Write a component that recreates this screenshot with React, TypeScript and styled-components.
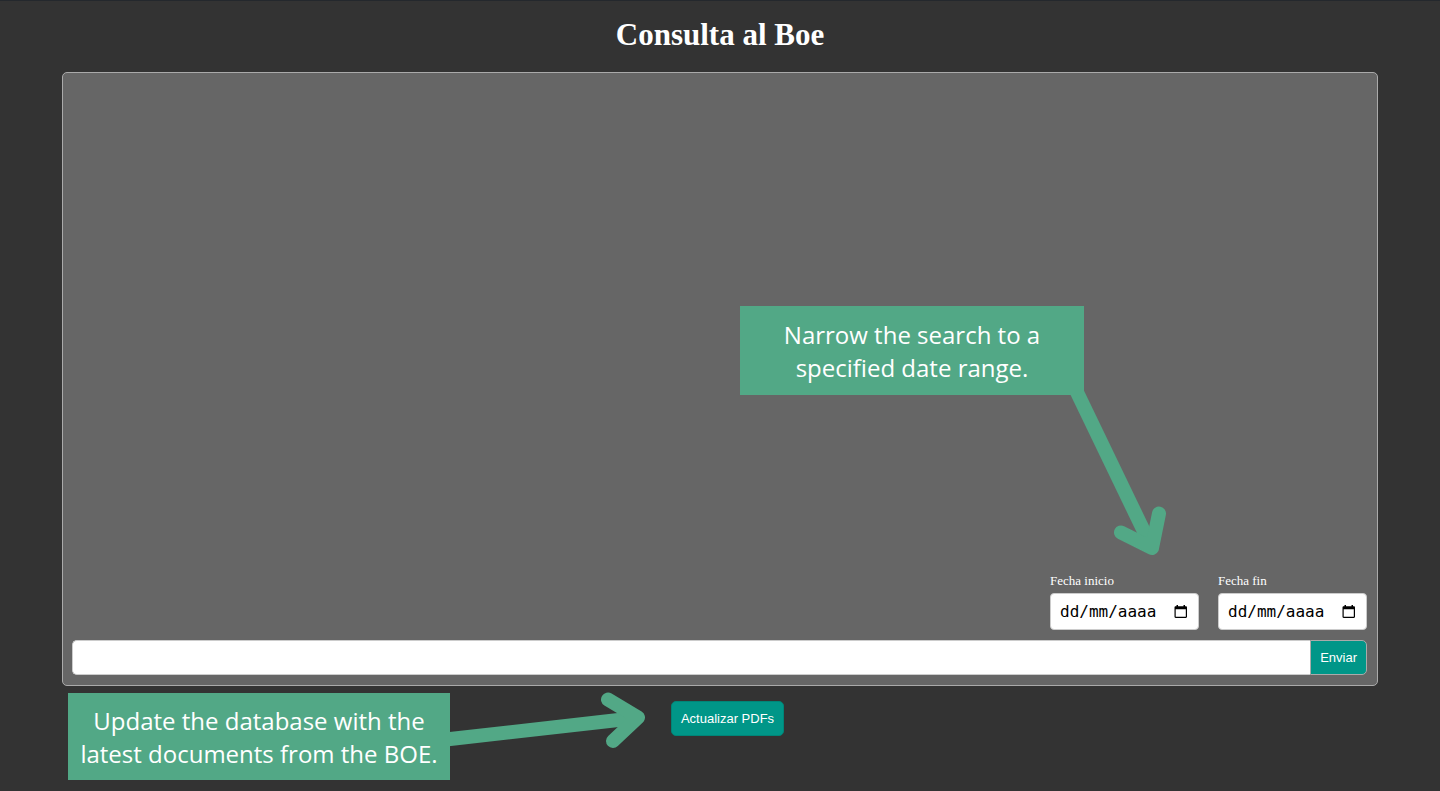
import React from "react";
import styled, { createGlobalStyle } from "styled-components";

const GlobalStyle = createGlobalStyle`
  *, *::before, *::after { box-sizing: border-box; }
  body {
    margin: 0;
    background: #333;
    color: #fff;
    font-family: "Liberation Serif", "Times New Roman", serif;
  }
`;

const Page = styled.div`
  display: flex;
  flex-direction: column;
  min-height: 100vh;
  padding: 0 62px;
  border-top: 1px solid #24282d;
`;

const Title = styled.h1`
  margin: 0;
  padding: 15px 0 19px;
  font-size: 31px;
  line-height: 37px;
  text-align: center;
`;

const Panel = styled.main`
  position: relative;
  flex: 1;
  display: flex;
  flex-direction: column;
  padding: 9px 10px 10px 9px;
  border: 1px solid #aaa;
  border-radius: 5px;
  background: #666;
`;

const Messages = styled.section`
  flex: 1;
`;

const Form = styled.form`
  display: flex;
  flex-direction: column;
  gap: 10px;
`;

const DateRange = styled.div`
  display: flex;
  justify-content: flex-end;
  gap: 19px;
`;

const Field = styled.div`
  display: flex;
  flex-direction: column;
  gap: 5px;
  width: 149px;
`;

const FieldLabel = styled.label`
  font-size: 13px;
  line-height: 15px;
`;

const DateBox = styled.div`
  display: flex;
  align-items: center;
  height: 37px;
  padding: 0 10px 0 9px;
  border: 1px solid #ccc;
  border-radius: 4px;
  background: #fff;
`;

const DateInput = styled.input`
  flex: 1;
  min-width: 0;
  padding: 0;
  border: 0;
  outline: 0;
  background: transparent;
  color: #000;
  font-family: "DejaVu Sans Mono", monospace;
  font-size: 16px;
  line-height: 19px;

  &::placeholder {
    color: #000;
    opacity: 1;
  }
`;

const PickerButton = styled.button`
  display: flex;
  padding: 0;
  border: 0;
  background: transparent;
  color: #000;
`;

const QueryRow = styled.div`
  display: flex;
  height: 35px;
`;

const QueryInput = styled.input`
  flex: 1;
  min-width: 0;
  padding: 0 10px;
  border: 1px solid #ccc;
  border-right: 0;
  border-radius: 5px 0 0 5px;
  outline: 0;
  background: #fff;
  font-size: 16px;
`;

const Button = styled.button<{ $joined?: boolean }>`
  padding: 0 9px;
  border: ${(p) => (p.$joined ? "1px solid #aaa" : "1px solid #008578")};
  border-radius: ${(p) => (p.$joined ? "0 5px 5px 0" : "5px")};
  background: #009688;
  color: #fff;
  font-family: "Liberation Sans", Arial, sans-serif;
  font-size: 13px;
  line-height: 15px;
`;

const Footer = styled.footer`
  position: relative;
  display: flex;
  justify-content: center;
  align-items: flex-start;
  height: 105px;
  padding: 15px 0 0 15px;

  ${Button} {
    height: 35px;
  }
`;

const Callout = styled.p`
  position: absolute;
  display: flex;
  align-items: center;
  justify-content: center;
  margin: 0;
  background: #52a886;
  color: #fff;
  font-family: "Open Sans", sans-serif;
  font-size: 24px;
  line-height: 33px;
  text-align: center;
`;

const DateCallout = styled(Callout)`
  right: 293px;
  bottom: 290px;
  width: 344px;
  height: 89px;
`;

const UpdateCallout = styled(Callout)`
  left: 6px;
  top: 7px;
  width: 382px;
  height: 87px;
`;

const Arrow = styled.svg`
  position: absolute;
  fill: none;
  stroke: #52a886;
  stroke-width: 14;
  stroke-linejoin: round;
  pointer-events: none;
`;

const DateArrow = styled(Arrow)`
  right: 207px;
  bottom: 125px;
`;

const UpdateArrow = styled(Arrow)`
  left: 378px;
  top: 4px;
`;

function CalendarIcon() {
  return (
    <svg width="14" height="15" viewBox="0 0 14 15" aria-hidden="true">
      <path
        fill="currentColor"
        fillRule="evenodd"
        d="M2.500 1h1.500v1.200h5.500V1H11v1.200h.8c.7 0 1.200.5 1.200 1.200v9.400c0 .7-.5 1.200-1.200 1.200H1.700c-.7 0-1.200-.5-1.200-1.200V3.400c0-.7.5-1.200 1.200-1.200h.8zM1.700 5.200v7.600h10.100V5.200z"
      />
    </svg>
  );
}

function DateField({ id, label }: { id: string; label: string }) {
  return (
    <Field>
      <FieldLabel htmlFor={id}>{label}</FieldLabel>
      <DateBox>
        <DateInput id={id} name={id} type="text" inputMode="numeric" placeholder="dd/mm/aaaa" />
        <PickerButton type="button" aria-label={`Calendario: ${label}`}>
          <CalendarIcon />
        </PickerButton>
      </DateBox>
    </Field>
  );
}

export default function App() {
  return (
    <>
      <GlobalStyle />
      <Page>
        <Title>Consulta al Boe</Title>
        <Panel>
          <Messages aria-label="Respuestas" />
          <Form onSubmit={(e) => e.preventDefault()}>
            <DateRange>
              <DateField id="fecha-inicio" label="Fecha inicio" />
              <DateField id="fecha-fin" label="Fecha fin" />
            </DateRange>
            <QueryRow>
              <QueryInput type="text" name="consulta" aria-label="Consulta" />
              <Button type="submit" $joined>
                Enviar
              </Button>
            </QueryRow>
          </Form>
          <DateArrow width="110" height="180" viewBox="0 0 110 180" aria-hidden="true">
            <path d="M14 6 L92 168" />
            <path strokeLinecap="round" d="M61 152.500 L92 168 L99 133.500" />
          </DateArrow>
          <DateCallout>
            <span>
              Narrow the search to a
              <br />
              specified date range.
            </span>
          </DateCallout>
        </Panel>
        <Footer>
          <Button type="button">Actualizar PDFs</Button>
          <UpdateArrow width="210" height="70" viewBox="0 0 210 70" aria-hidden="true">
            <path d="M8 49.200 L196 28" />
            <path strokeLinecap="round" d="M168 9.500 L198 27.500 L173 51" />
          </UpdateArrow>
          <UpdateCallout>
            <span>
              Update the database with the
              <br />
              latest documents from the BOE.
            </span>
          </UpdateCallout>
        </Footer>
      </Page>
    </>
  );
}
